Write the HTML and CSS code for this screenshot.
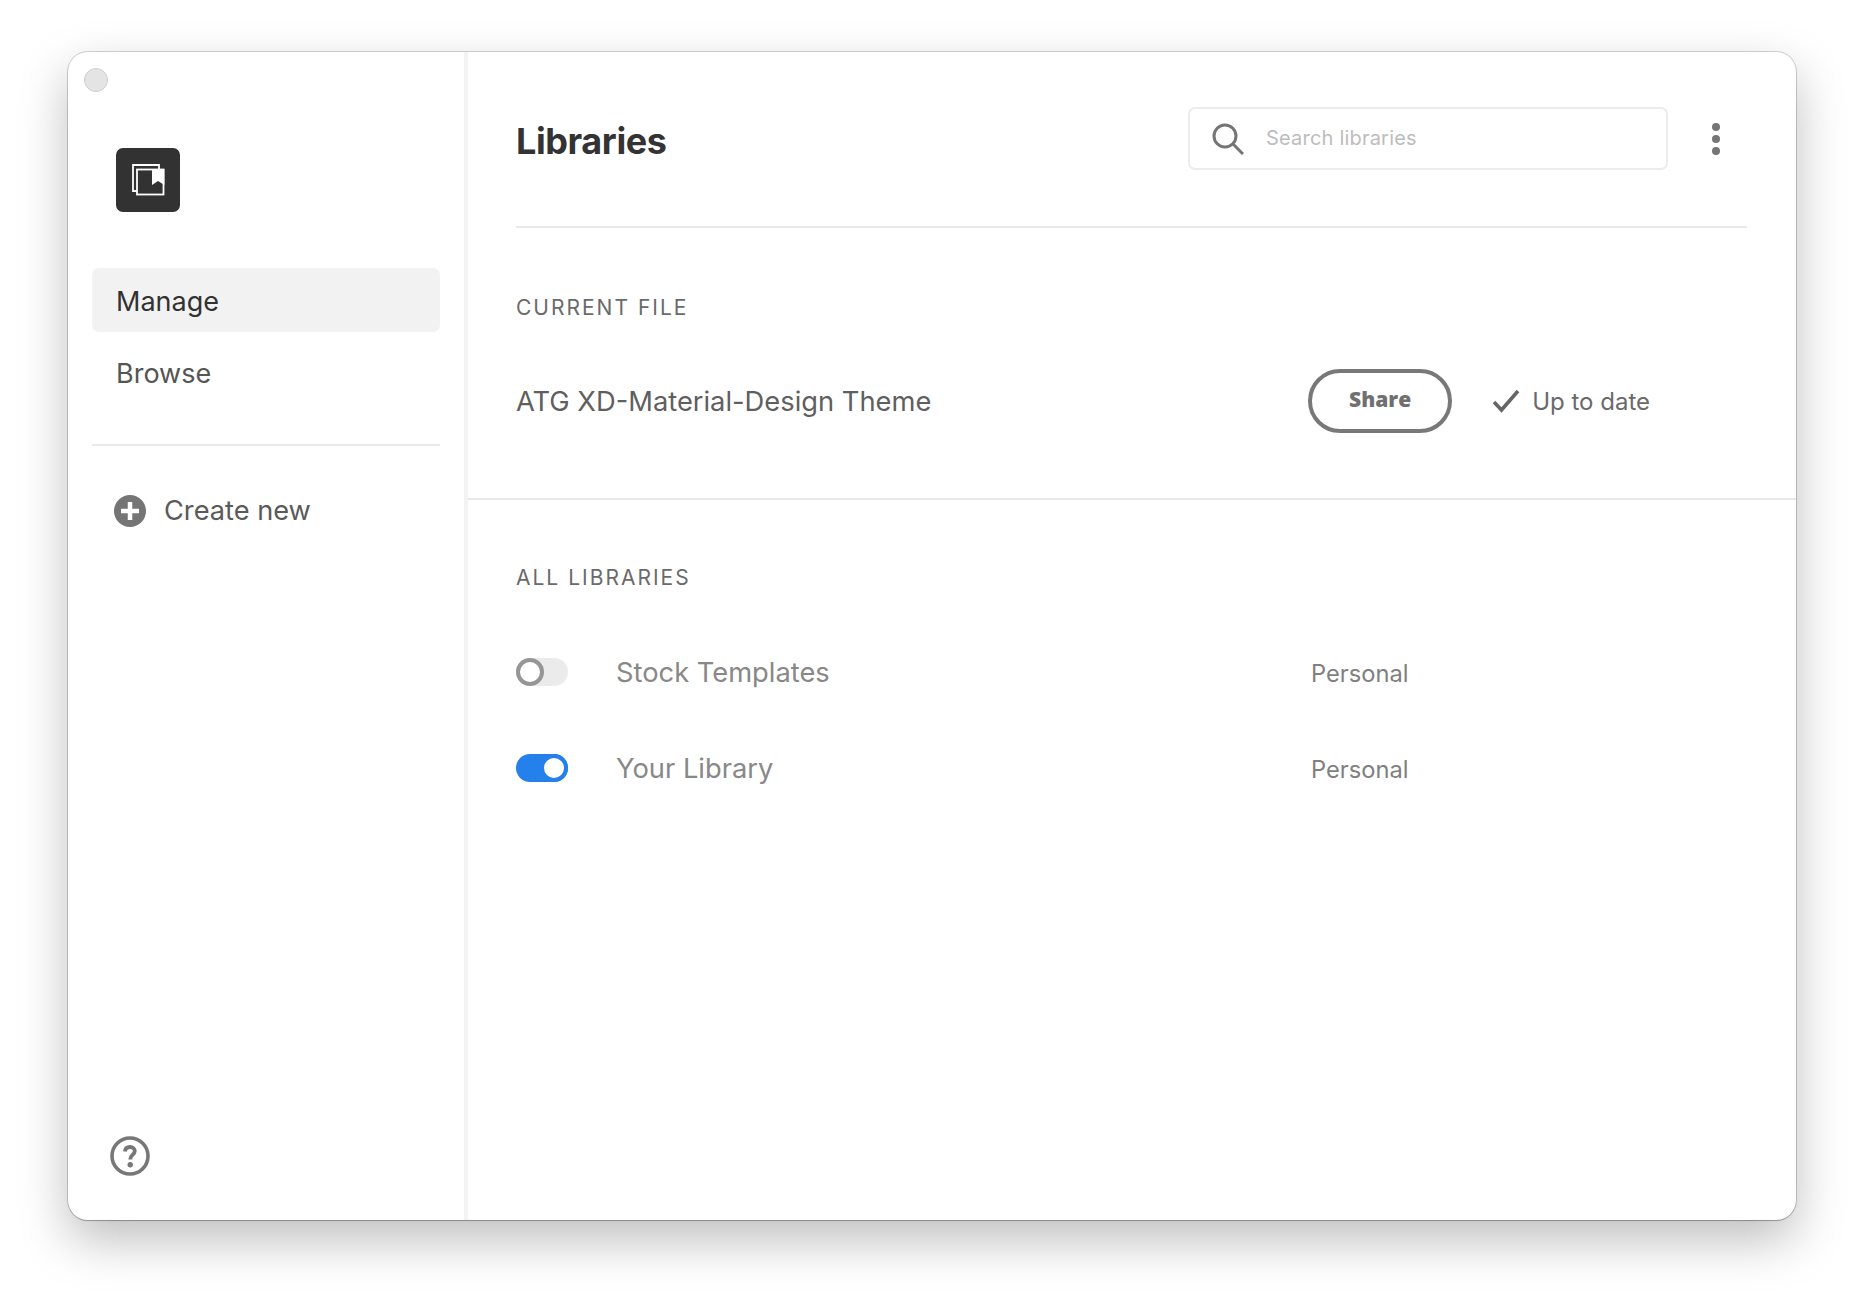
FILE: index.html
```html
<!DOCTYPE html>
<html lang="en">
<head>
<meta charset="utf-8">
<title>Libraries</title>
<link rel="stylesheet" href="styles.css">
</head>
<body>
<div class="window">
  <aside class="sidebar">
    <span class="traffic"></span>
    <div class="logo">
      <svg width="64" height="64" viewBox="0 0 64 64" fill="none" stroke="#fff" stroke-width="1.8">
        <path d="M21 43H17V17H43V21.5"/>
        <rect x="21" y="21.5" width="26.5" height="25"/>
        <path d="M36 21H48.4V37L42 33L36 37Z" fill="#fff" stroke="none"/>
      </svg>
    </div>
    <nav class="nav">
      <a class="nav-item active">Manage</a>
      <a class="nav-item">Browse</a>
    </nav>
    <div class="side-rule"></div>
    <div class="create">
      <svg width="32" height="32" viewBox="0 0 32 32"><circle cx="16" cy="16" r="16" fill="#757575"/><path d="M16 7V25M7 16H25" stroke="#fff" stroke-width="4.5"/></svg>
      <span>Create new</span>
    </div>
    <div class="help">
      <svg width="40" height="40" viewBox="0 0 40 40"><circle cx="20" cy="20" r="18" fill="none" stroke="#777" stroke-width="3.6"/><path d="M15 15.5C15.2 12.5 17.4 11 20 11C22.8 11 24.8 12.7 24.8 15C24.8 18.6 20.2 18.8 20.2 23.5" fill="none" stroke="#777" stroke-width="3.8"/><circle cx="20.2" cy="28.8" r="2.7" fill="#777"/></svg>
    </div>
  </aside>
  <main class="main">
    <div class="inner">
      <header class="header">
        <h1 class="title">Libraries</h1>
        <div class="search">
          <svg width="32" height="32" viewBox="0 0 32 32" fill="none" stroke="#757575" stroke-width="3"><circle cx="13" cy="13" r="11"/><path d="M21 21L31 31"/></svg>
          <span class="placeholder">Search libraries</span>
        </div>
        <div class="dots"><i></i><i></i><i></i></div>
      </header>
      <section class="current">
        <h2 class="label">CURRENT FILE</h2>
        <div class="file-row">
          <span class="file-name">ATG XD-Material-Design Theme</span>
          <button class="share">Share</button>
          <svg class="check" width="28" height="24" viewBox="0 0 28 24" fill="none" stroke="#666" stroke-width="3.6"><path d="M2 13L9.5 21L26 2"/></svg>
          <span class="status">Up to date</span>
        </div>
      </section>
    </div>
    <div class="full-rule"></div>
    <section class="all">
      <h2 class="label">ALL LIBRARIES</h2>
      <div class="lib-row">
        <span class="toggle"></span>
        <span class="lib-name">Stock Templates</span>
        <span class="lib-type">Personal</span>
      </div>
      <div class="lib-row">
        <span class="toggle on"></span>
        <span class="lib-name">Your Library</span>
        <span class="lib-type">Personal</span>
      </div>
    </section>
  </main>
</div>
</body>
</html>
```

FILE: styles.css
```css
*, *::after { box-sizing: border-box; }
html, body { margin: 0; height: 100%; background: #fff; }
body {
  padding: 52px 68px 84px 68px;
  font-family: Inter, "Liberation Sans", sans-serif;
  overflow: hidden;
}
.window {
  display: flex;
  height: 1168px;
  background: #fff;
  border-radius: 20px;
  box-shadow: 0 0 0 1px rgba(0,0,0,.16), 0 1px 1px rgba(0,0,0,.18), 0 20px 50px rgba(0,0,0,.26);
  overflow: hidden;
}
.sidebar {
  position: relative;
  width: 400px;
  flex: none;
  display: flex;
  flex-direction: column;
  padding: 96px 24px 44px;
  border-right: 4px solid #f3f3f3;
}
.traffic {
  position: absolute;
  left: 16px;
  top: 16px;
  width: 24px;
  height: 24px;
  border-radius: 50%;
  background: #e4e4e4;
  border: 1px solid #cdcdcd;
}
.logo {
  width: 64px;
  height: 64px;
  margin-left: 24px;
  border-radius: 7px;
  background: #323232;
}
.logo svg { display: block; }
.nav { margin-top: 56px; display: flex; flex-direction: column; gap: 8px; }
.nav-item {
  height: 64px;
  padding: 2px 0 0 24px;
  display: flex;
  align-items: center;
  font-size: 27px;
  color: #555;
  border-radius: 7px;
}
.nav-item.active { background: #f2f2f2; color: #323232; }
.side-rule { height: 2px; background: #eaeaea; margin-top: 40px; }
.create {
  margin-top: 48px;
  margin-left: 22px;
  display: flex;
  align-items: center;
  gap: 18px;
  font-size: 27.2px;
  color: #5a5a5a;
}
.create svg { flex: none; }
.help { margin-top: auto; margin-left: 18px; height: 40px; }
.main { flex: 1; min-width: 0; display: flex; flex-direction: column; }
.inner { padding: 0 49px 0 48px; }
.header {
  height: 176px;
  display: flex;
  align-items: center;
  padding-top: 2px;
  border-bottom: 2px solid #e9e9e9;
}
.title { margin: 1px 0 0; flex: 1; font-size: 36px; font-weight: 700; color: #333; letter-spacing: -.4px; }
.search {
  width: 480px;
  height: 63px;
  display: flex;
  align-items: center;
  gap: 22px;
  padding-left: 22px;
  border: 2px solid #ececec;
  border-radius: 7px;
  margin-top: -3px;
}
.placeholder { font-size: 20px; color: #bdbdbd; letter-spacing: .2px; padding-bottom: 2px; }
.dots { width: 62px; margin-left: 17px; display: flex; flex-direction: column; align-items: center; gap: 4px; margin-top: -3px; }
.dots i { width: 8px; height: 8px; border-radius: 50%; background: #757575; }
.current { height: 270px; padding-top: 68px; }
.label { margin: 0; font-size: 21px; font-weight: 400; color: #6a6a6a; letter-spacing: 2px; line-height: 24px; }
.file-row { display: flex; align-items: center; margin-top: 49px; height: 64px; }
.file-name { flex: 1; font-size: 27.3px; color: #5f5f5f; padding-top: 1px; }
.share {
  width: 144px;
  height: 64px;
  border: 4px solid #787878;
  border-radius: 32px;
  background: #fff;
  font: 800 21px "Open Sans", sans-serif;
  color: #707070;
  padding: 0 0 4px;
}
.check { margin-left: 40px; }
.status { margin-left: 12px; margin-right: 97px; padding-top: 1px; font-size: 24px; color: #6a6a6a; }
.full-rule { height: 2px; background: #e9e9e9; }
.all { padding: 66px 49px 0 48px; }
.lib-row { display: flex; align-items: center; height: 28px; margin-top: 68px; }
.all .label + .lib-row { margin-top: 68px; }
.toggle {
  position: relative;
  width: 52px;
  height: 28px;
  flex: none;
  border-radius: 14px;
  background: #ebebeb;
}
.toggle::after {
  content: "";
  position: absolute;
  left: 0;
  top: 0;
  width: 28px;
  height: 28px;
  border-radius: 50%;
  background: #fff;
  border: 4.5px solid #969696;
}
.toggle.on { background: #2680eb; }
.toggle.on::after { left: 24px; border-color: #2680eb; }
.lib-name { margin-left: 48px; width: 695px; font-size: 27.3px; color: #888; }
.lib-type { font-size: 23.7px; color: #808080; padding-top: 2px; }
```
